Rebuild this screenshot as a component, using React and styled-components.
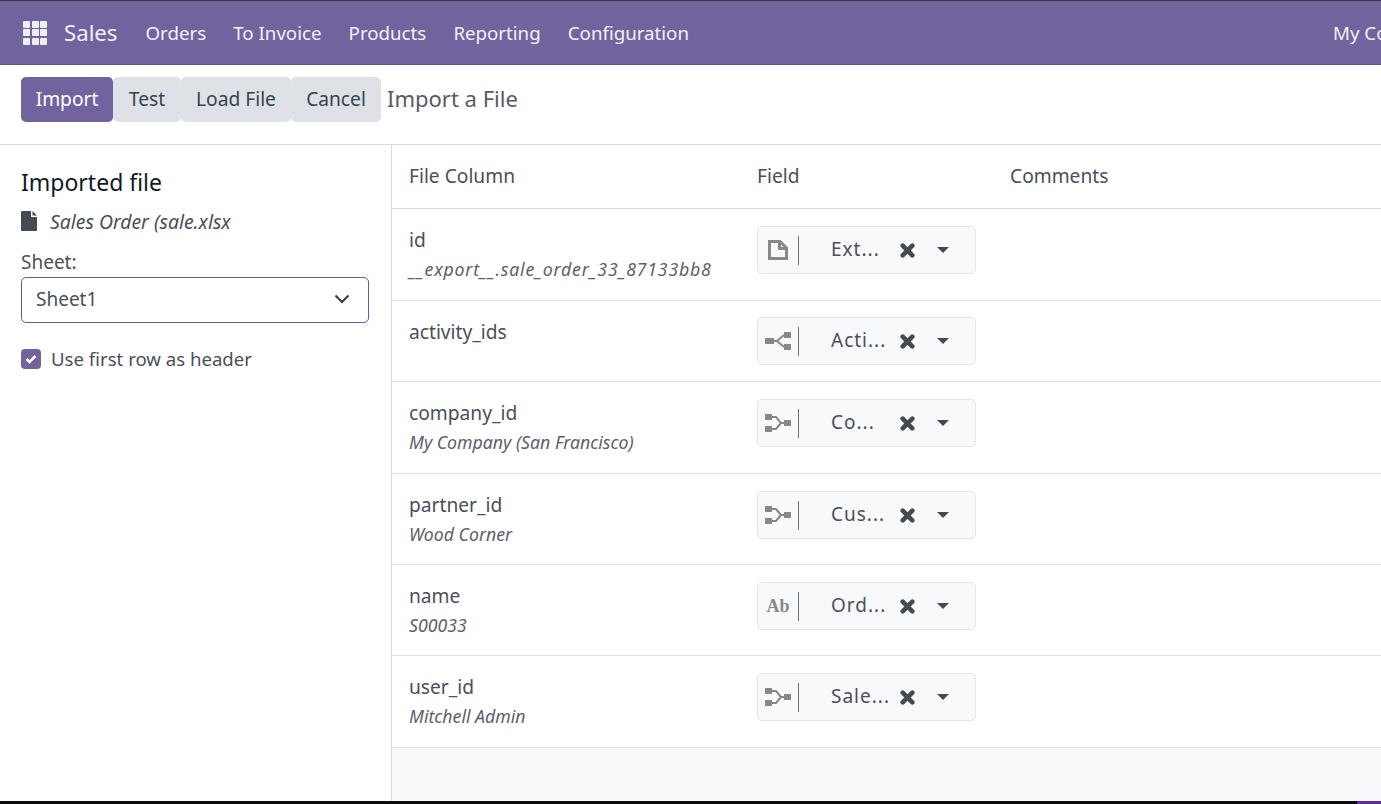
import React from 'react';
import styled, { createGlobalStyle } from 'styled-components';

const GlobalStyle = createGlobalStyle`
  html, body { margin: 0; padding: 0; background: #fff; overflow: hidden; }
  body { font-family: "Noto Sans", "Open Sans", sans-serif; color: #4a4f59; }
  * { box-sizing: border-box; }
`;

const Page = styled.div`
  height: 804px;
  display: flex;
  flex-direction: column;
`;

const NavBar = styled.nav`
  height: 65px;
  flex: none;
  display: flex;
  align-items: center;
  justify-content: space-between;
  padding-left: 23px;
  background: #71639e;
  border-top: 1px solid #3d3650;
  border-bottom: 1px solid #5f5487;
  color: #f3f1f7;
  overflow: hidden;
`;

const NavLeft = styled.div`
  display: flex;
  align-items: center;
`;

const AppsGrid = styled.div`
  display: grid;
  grid-template-columns: repeat(3, 7px);
  grid-auto-rows: 7px;
  gap: 1.5px;
  margin-right: 17px;
  span { background: #f0eef5; border-radius: 1px; }
`;

const Brand = styled.span`
  font-size: 22.2px;
  margin-right: 28px;
  padding-bottom: 1px;
`;

const NavItem = styled.span`
  font-size: 18.7px;
  margin-right: 27.1px;
  padding-bottom: 1px;
`;

const Company = styled.span`
  font-size: 18.7px;
  white-space: nowrap;
  width: 48px;
  overflow: hidden;
  padding-bottom: 1px;
`;

const ControlPanel = styled.div`
  height: 80px;
  flex: none;
  display: flex;
  align-items: center;
  padding: 0 21px 10px;
  border-bottom: 1px solid #d8dadd;
`;

const Button = styled.button`
  height: 45px;
  border: 0;
  border-radius: 5px;
  padding: 0 0 2px;
  width: ${p => p.$w}px;
  font: inherit;
  font-size: 19.2px;
  background: ${p => (p.$primary ? '#71639e' : '#dee2e6')};
  color: ${p => (p.$primary ? '#fff' : '#374151')};
`;

const PageTitle = styled.span`
  font-size: 22px;
  margin-left: 6px;
  padding-bottom: 4px;
  color: #565b63;
`;

const Body = styled.div`
  flex: 1;
  display: flex;
  min-height: 0;
`;

const Sidebar = styled.aside`
  width: 392px;
  flex: none;
  padding: 21px 22px 0 21px;
  border-right: 1px solid #d8dadd;
`;

const SideTitle = styled.h2`
  margin: 0;
  font-size: 23px;
  font-weight: 400;
  line-height: 32px;
  color: #111827;
`;

const FileRow = styled.div`
  display: flex;
  align-items: center;
  gap: 13px;
  height: 32px;
  margin-top: 7px;
  font-size: 19.4px;
  font-style: italic;
`;

const SheetLabel = styled.div`
  margin-top: 11px;
  font-size: 19px;
  line-height: 28px;
`;

const SheetSelect = styled.div`
  height: 46px;
  margin-top: 1px;
  display: flex;
  align-items: center;
  justify-content: space-between;
  padding: 0 18px 2px 14px;
  border: 1px solid #6b5e96;
  border-radius: 5px;
  font-size: 19px;
`;

const CheckRow = styled.label`
  display: flex;
  align-items: center;
  gap: 10px;
  margin-top: 22px;
  font-size: 18.6px;
  line-height: 28px;
`;

const CheckBox = styled.span`
  width: 20px;
  height: 20px;
  border-radius: 4px;
  background: #71639e;
  display: flex;
  align-items: center;
  justify-content: center;
`;

const Content = styled.main`
  flex: 1;
  min-width: 0;
  background: #f8f9fa;
`;

const Grid = styled.div`
  background: #fff;
  display: grid;
  grid-template-columns: 348px 253px 1fr;
`;

const HeadCell = styled.div`
  height: 64px;
  padding: 0 0 2px 17px;
  display: flex;
  align-items: center;
  font-size: 19.2px;
  border-bottom: 1px solid #d8dadd;
`;

const Row = styled.div`
  display: contents;
  & > div { height: ${p => p.$h}px; border-bottom: 1px solid #dfe1e4; }
`;

const ColumnCell = styled.div`
  padding: 16px 0 0 17px;
`;

const ColumnName = styled.div`
  font-size: 19.2px;
  line-height: 30px;
`;

const Sample = styled.div`
  font-size: 17.7px;
  font-style: italic;
  line-height: 28px;
  letter-spacing: ${p => p.$track || 0}px;
  color: #5c6169;
`;

const FieldCell = styled.div`
  display: flex;
  align-items: flex-start;
  padding: ${p => p.$top}px 0 0 17px;
`;

const FieldBox = styled.div`
  width: 219px;
  height: 48px;
  display: flex;
  align-items: center;
  border: 1px solid #e3e6e9;
  border-radius: 5px;
  background: #f8f9fa;
`;

const TypeIcon = styled.div`
  width: 41px;
  height: 29px;
  flex: none;
  display: flex;
  align-items: center;
  justify-content: center;
  border-right: 1px solid #6b7075;
  color: #888;
  font-family: "Liberation Serif", serif;
  font-weight: 700;
  font-size: 18px;
`;

const FieldName = styled.span`
  width: 60px;
  margin-left: 32px;
  padding-bottom: 2px;
  font-size: 19px;
  letter-spacing: 1px;
  white-space: nowrap;
`;

const ClearIcon = styled.svg`
  width: 15px;
  height: 15px;
  margin-left: 9px;
  flex: none;
`;

const Caret = styled.span`
  width: 0;
  height: 0;
  margin-left: 22px;
  border-left: 6px solid transparent;
  border-right: 6px solid transparent;
  border-top: 6px solid #454a52;
`;

const BottomStrip = styled.div`
  height: 3px;
  flex: none;
  display: flex;
  justify-content: flex-end;
  background: #0b0c0e;
`;

const StripAccent = styled.span`
  width: 24px;
  background: #5b2fa0;
`;

const FileIcon = () => (
  <svg width="16" height="20" viewBox="0 0 16 20">
    <path d="M1 0h9v6h6v13a1 1 0 0 1-1 1H1a1 1 0 0 1-1-1V1a1 1 0 0 1 1-1zM11.500 0L16 4.500h-4.500z" fill="#454a52" />
  </svg>
);

const Chevron = () => (
  <svg width="16" height="10" viewBox="0 0 16 10">
    <path d="M1.500 1.500L8 8l6.500-6.500" fill="none" stroke="#343a40" strokeWidth="2" />
  </svg>
);

const Tick = () => (
  <svg width="12" height="10" viewBox="0 0 12 10">
    <path d="M1.500 5l3 3 6-6" fill="none" stroke="#fff" strokeWidth="2.500" />
  </svg>
);

const CharIcon = () => (
  <svg width="20" height="20" viewBox="0 0 20 20">
    <path d="M1.500 1.500h10.500l6.500 6.500v10.500h-17zM11.500 1.500v7h7" fill="none" stroke="#888" strokeWidth="3" />
  </svg>
);

// one to many: single node on the left, forks out to two on the right
const ForkOut = () => (
  <svg width="27" height="20" viewBox="0 0 27 20">
    <g fill="#888">
      <rect x="0" y="7" width="9" height="6" />
      <rect x="19" y="1" width="7" height="6" />
      <rect x="19" y="13" width="7" height="6" />
    </g>
    <path d="M9 10h3l7-6M12 10l7 6" fill="none" stroke="#888" strokeWidth="2" />
  </svg>
);

// many to one: two nodes on the left join into one on the right
const ForkIn = () => (
  <svg width="27" height="20" viewBox="0 0 27 20">
    <g fill="#888">
      <rect x="0" y="1" width="7" height="6" />
      <rect x="0" y="13" width="7" height="6" />
      <rect x="19" y="7" width="7" height="6" />
    </g>
    <path d="M7 4h4l5 6h3M7 16h4l5-6" fill="none" stroke="#888" strokeWidth="2" />
  </svg>
);

const Clear = () => (
  <ClearIcon viewBox="0 0 15 15">
    <path d="M2.700 2.700l9.600 9.600M12.300 2.700l-9.600 9.600" stroke="#454a52" strokeWidth="4.600" strokeLinecap="round" />
  </ClearIcon>
);

const rows = [
  { name: 'id', sample: '__export__.sale_order_33_87133bb8', track: 0.8, field: 'Ext...', icon: <CharIcon />, h: 92, top: 17 },
  { name: 'activity_ids', field: 'Acti...', icon: <ForkOut />, h: 81, top: 16 },
  { name: 'company_id', sample: 'My Company (San Francisco)', field: 'Co...', icon: <ForkIn />, h: 92, top: 17 },
  { name: 'partner_id', sample: 'Wood Corner', field: 'Cus...', icon: <ForkIn />, h: 91, top: 17 },
  { name: 'name', sample: 'S00033', field: 'Ord...', icon: 'Ab', h: 91, top: 17 },
  { name: 'user_id', sample: 'Mitchell Admin', field: 'Sale...', icon: <ForkIn />, h: 92, top: 17 },
];

const navItems = ['Orders', 'To Invoice', 'Products', 'Reporting', 'Configuration'];

const App = () => (
  <Page>
    <GlobalStyle />
    <NavBar>
      <NavLeft>
        <AppsGrid>
          {Array.from({ length: 9 }, (_, i) => <span key={i} />)}
        </AppsGrid>
        <Brand>Sales</Brand>
        {navItems.map(item => <NavItem key={item}>{item}</NavItem>)}
      </NavLeft>
      <Company>My Company</Company>
    </NavBar>
    <ControlPanel>
      <Button $primary $w={92}>Import</Button>
      <Button $w={68}>Test</Button>
      <Button $w={110}>Load File</Button>
      <Button $w={90}>Cancel</Button>
      <PageTitle>Import a File</PageTitle>
    </ControlPanel>
    <Body>
      <Sidebar>
        <SideTitle>Imported file</SideTitle>
        <FileRow><FileIcon />Sales Order (sale.xlsx</FileRow>
        <SheetLabel>Sheet:</SheetLabel>
        <SheetSelect>Sheet1<Chevron /></SheetSelect>
        <CheckRow><CheckBox><Tick /></CheckBox>Use first row as header</CheckRow>
      </Sidebar>
      <Content>
        <Grid>
          <HeadCell>File Column</HeadCell>
          <HeadCell>Field</HeadCell>
          <HeadCell>Comments</HeadCell>
          {rows.map(r => (
            <Row key={r.name} $h={r.h}>
              <ColumnCell>
                <ColumnName>{r.name}</ColumnName>
                {r.sample && <Sample $track={r.track}>{r.sample}</Sample>}
              </ColumnCell>
              <FieldCell $top={r.top}>
                <FieldBox>
                  <TypeIcon>{r.icon}</TypeIcon>
                  <FieldName>{r.field}</FieldName>
                  <Clear />
                  <Caret />
                </FieldBox>
              </FieldCell>
              <div />
            </Row>
          ))}
        </Grid>
      </Content>
    </Body>
    <BottomStrip><StripAccent /></BottomStrip>
  </Page>
);

export default App;
